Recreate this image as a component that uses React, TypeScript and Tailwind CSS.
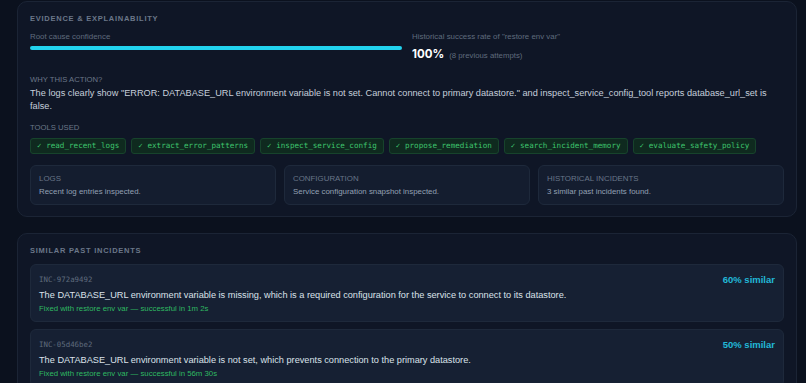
import React from "react";

const tools = [
  "read_recent_logs",
  "extract_error_patterns",
  "inspect_service_config",
  "propose_remediation",
  "search_incident_memory",
  "evaluate_safety_policy",
];

const evidence = [
  { t: "LOGS", d: "Recent log entries inspected." },
  { t: "CONFIGURATION", d: "Service configuration snapshot inspected." },
  { t: "HISTORICAL INCIDENTS", d: "3 similar past incidents found." },
];

const incidents = [
  {
    id: "INC-972a9492",
    sim: "60% similar",
    d: "The DATABASE_URL environment variable is missing, which is a required configuration for the service to connect to its datastore.",
    f: "Fixed with restore env var — successful in 1m 2s",
  },
  {
    id: "INC-05d46be2",
    sim: "50% similar",
    d: "The DATABASE_URL environment variable is not set, which prevents connection to the primary datastore.",
    f: "Fixed with restore env var — successful in 56m 30s",
  },
];

export default function App() {
  return (
    <div className="min-h-screen overflow-hidden bg-[#0b111e] pl-[17px] pr-[9px] pt-px font-['Liberation_Sans',Arial,sans-serif]">
      <div className="rounded-[10px] border border-[#1b2435] bg-[#0f1626] px-3 pb-[11px] pt-[11px]">
        <div className="text-[7.5px] font-bold leading-[12px] tracking-[0.1em] text-[#6b7789]">
          EVIDENCE &amp; EXPLAINABILITY
        </div>
        <div className="mt-[7px] grid grid-cols-2 gap-[10px]">
          <div>
            <div className="text-[7.9px] leading-[10px] text-[#5f6b7d]">Root cause confidence</div>
            <div className="mt-[4px] h-[4px] rounded-full bg-[#22d3ee]" />
          </div>
          <div>
            <div className="text-[7.9px] leading-[10px] text-[#5f6b7d]">
              Historical success rate of "restore env var"
            </div>
            <div className="mt-[5px] flex items-baseline gap-[5px]">
              <span className="font-['Inter',sans-serif] text-[11.5px] font-bold leading-[15px] text-white">100%</span>
              <span className="text-[7.8px] text-[#5f6b7d]">(8 previous attempts)</span>
            </div>
          </div>
        </div>
        <div className="mt-[13px] text-[7.7px] leading-[10px] text-[#6b7789]">WHY THIS ACTION?</div>
        <div className="mt-[2px] text-[9.2px] leading-[13px] text-[#c6cfdb]">
          The logs clearly show "ERROR: DATABASE_URL environment variable is not set. Cannot connect to primary
          datastore." and inspect_service_config_tool reports database_url_set is false.
        </div>
        <div className="mt-[10px] text-[7.7px] leading-[10px] text-[#6b7789]">TOOLS USED</div>
        <div className="mt-[5px] flex flex-wrap gap-[5px]">
          {tools.map((t) => (
            <span
              key={t}
              className="flex h-[16px] items-center rounded-[3px] border border-[#17432c] bg-[#0f2a1f] px-[6px] font-['DejaVu_Sans_Mono',monospace] text-[7.6px] text-[#3ec46d]"
            >
              ✓ {t}
            </span>
          ))}
        </div>
        <div className="mt-[11px] grid grid-cols-3 gap-[8px]">
          {evidence.map((e) => (
            <div key={e.t} className="h-[40px] rounded-[6px] border border-[#1e293b] bg-[#141d2f] px-[8px] pt-[8px]">
              <div className="text-[7.9px] leading-[10px] text-[#687588]">{e.t}</div>
              <div className="mt-[3px] text-[7.9px] leading-[10px] text-[#93a0b3]">{e.d}</div>
            </div>
          ))}
        </div>
      </div>

      <div className="mt-[16px] rounded-[10px] border border-[#1b2435] bg-[#0f1626] px-3 pb-3 pt-[11px]">
        <div className="text-[7.5px] font-bold leading-[12px] tracking-[0.1em] text-[#6b7789]">
          SIMILAR PAST INCIDENTS
        </div>
        <div className="mt-[7px] flex flex-col gap-[7px]">
          {incidents.map((i) => (
            <div key={i.id} className="h-[58px] rounded-[6px] border border-[#1e293b] bg-[#162033] px-[8px] pt-[9px]">
              <div className="flex items-center justify-between">
                <span className="font-['DejaVu_Sans_Mono',monospace] text-[7.4px] leading-[12px] text-[#5f6b7d]">{i.id}</span>
                <span className="text-[9.5px] font-bold leading-[12px] text-[#22b8d8]">{i.sim}</span>
              </div>
              <div className="mt-[3px] text-[9.2px] leading-[13px] text-[#dbe2ea]">{i.d}</div>
              <div className="mt-[1px] text-[7.8px] leading-[11px] text-[#2fb862]">{i.f}</div>
            </div>
          ))}
        </div>
      </div>
    </div>
  );
}
